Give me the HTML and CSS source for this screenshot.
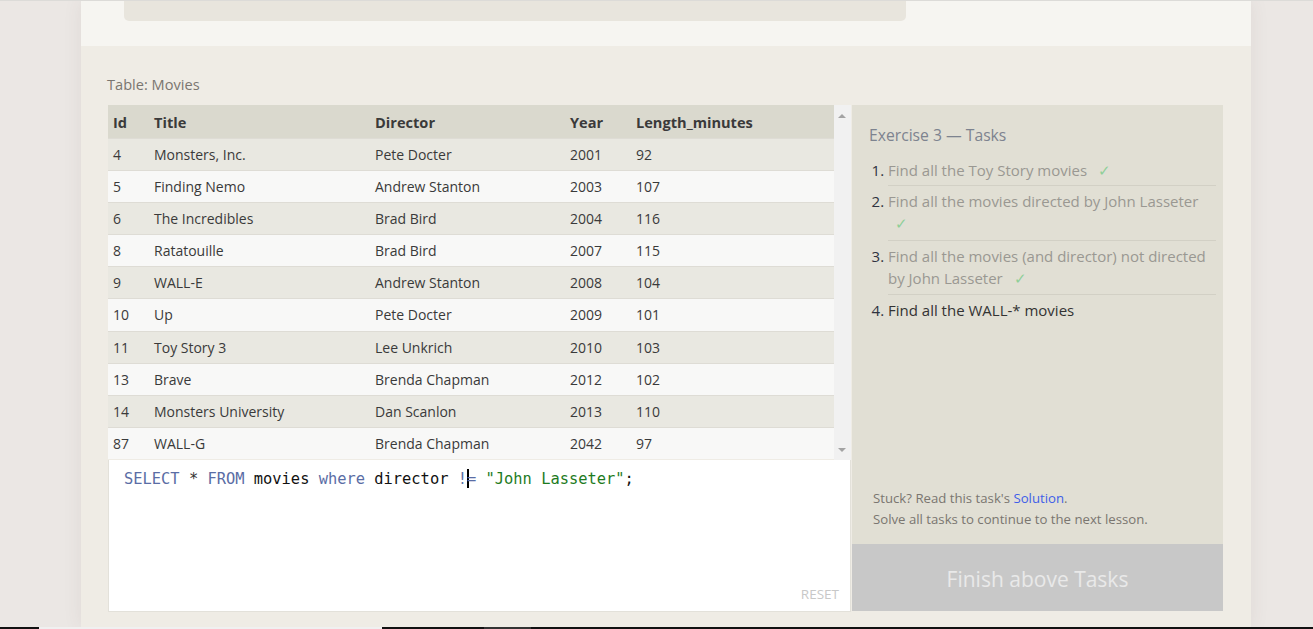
FILE: index.html
```html
<!DOCTYPE html>
<html>
<head>
<meta charset="utf-8">
<link rel="stylesheet" href="styles.css">
</head>
<body>
<div class="page">
  <div class="top-section">
    <div class="prev-box"></div>
  </div>
  <div class="exercise">
    <div class="table-label">Table: Movies</div>
    <div class="workspace">
      <div class="left-col">
        <div class="table-wrap">
          <div class="table-area">
            <table class="movies">
              <thead>
                <tr><th class="c-id">Id</th><th class="c-title">Title</th><th class="c-dir">Director</th><th class="c-year">Year</th><th>Length_minutes</th></tr>
              </thead>
              <tbody>
                <tr><td>4</td><td>Monsters, Inc.</td><td>Pete Docter</td><td>2001</td><td>92</td></tr>
                <tr><td>5</td><td>Finding Nemo</td><td>Andrew Stanton</td><td>2003</td><td>107</td></tr>
                <tr><td>6</td><td>The Incredibles</td><td>Brad Bird</td><td>2004</td><td>116</td></tr>
                <tr><td>8</td><td>Ratatouille</td><td>Brad Bird</td><td>2007</td><td>115</td></tr>
                <tr><td>9</td><td>WALL-E</td><td>Andrew Stanton</td><td>2008</td><td>104</td></tr>
                <tr class="tall"><td>10</td><td>Up</td><td>Pete Docter</td><td>2009</td><td>101</td></tr>
                <tr><td>11</td><td>Toy Story 3</td><td>Lee Unkrich</td><td>2010</td><td>103</td></tr>
                <tr><td>13</td><td>Brave</td><td>Brenda Chapman</td><td>2012</td><td>102</td></tr>
                <tr><td>14</td><td>Monsters University</td><td>Dan Scanlon</td><td>2013</td><td>110</td></tr>
                <tr><td>87</td><td>WALL-G</td><td>Brenda Chapman</td><td>2042</td><td>97</td></tr>
              </tbody>
            </table>
          </div>
          <div class="scrollbar">
            <span class="arrow up"></span>
            <span class="arrow down"></span>
          </div>
        </div>
        <div class="editor">
          <div class="code"><span class="kw">SELECT</span> <span class="op">*</span> <span class="kw">FROM</span> movies <span class="kw">where</span> director <span class="kw">!</span><span class="cursor"></span><span class="kw">=</span> <span class="str">"John Lasseter"</span>;</div>
          <div class="reset">RESET</div>
        </div>
      </div>
      <div class="right-col">
        <div class="tasks">
          <div class="tasks-title">Exercise 3 — Tasks</div>
          <ol class="task-list">
            <li class="done"><span class="t">Find all the Toy Story movies <span class="check">✓</span></span></li>
            <li class="done"><span class="t">Find all the movies directed by John Lasseter <span class="check">✓</span></span></li>
            <li class="done"><span class="t">Find all the movies (and director) not directed by John Lasseter <span class="check">✓</span></span></li>
            <li class="current"><span class="t">Find all the WALL-* movies</span></li>
          </ol>
          <div class="help">
            <div>Stuck? Read this task's <a class="link">Solution</a>.</div>
            <div>Solve all tasks to continue to the next lesson.</div>
          </div>
        </div>
        <div class="finish">Finish above Tasks</div>
      </div>
    </div>
  </div>
</div>
<div class="taskbar">
  <span class="tb-black tb-a"></span><span class="tb-light"></span><span class="tb-black tb-b"></span><span class="tb-grey"></span><span class="tb-black tb-c"></span>
</div>
</body>
</html>
```
FILE: styles.css
```css
html, body {
  margin: 0;
  padding: 0;
}
body {
  width: 1313px;
  height: 629px;
  overflow: hidden;
  background: #ebe7e4;
  border-top: 1px solid #dcdbd8;
  box-sizing: border-box;
  font-family: "Open Sans", "Noto Sans", sans-serif;
  color: #333;
  display: flex;
  flex-direction: column;
}
.page {
  width: 1170px;
  margin-left: 81px;
  height: 626px;
  box-shadow: 0 0 18px rgba(90, 70, 60, 0.08);
  display: flex;
  flex-direction: column;
}
.top-section {
  height: 45px;
  background: #f6f5f1;
  padding-left: 43px;
}
.prev-box {
  width: 782px;
  height: 20px;
  background: #e8e5dd;
  border-radius: 0 0 5px 5px;
}
.exercise {
  flex: 1;
  background: #efece5;
  padding: 28px 28px 0 26px;
}
.table-label {
  font-size: 14.6px;
  color: #7a7670;
  line-height: 20px;
  height: 20px;
}
.workspace {
  margin-top: 11px;
  display: flex;
  margin-left: 1px;
}
.left-col {
  width: 743px;
  display: flex;
  flex-direction: column;
}
.table-wrap {
  height: 355px;
  display: flex;
  overflow: hidden;
}
.table-area {
  width: 726px;
  overflow: hidden;
}
.movies {
  width: 100%;
  border-collapse: collapse;
  font-size: 14px;
  color: #333;
}
.movies th {
  background: #dad9ce;
  text-align: left;
  font-weight: 700;
  height: 32px;
  padding: 1px 0 0 5px;
  font-size: 14.6px;
  color: #3a3a3a;
}
.movies td {
  height: 31px;
  padding: 0 0 0 5px;
  border-top: 1px solid #dedcd5;
  color: #3a3a3a;
}
.movies tr.tall td { padding-bottom: 1px; }
.movies tbody tr:nth-child(odd) td { background: #e9e8e1; }
.movies tbody tr:nth-child(even) td { background: #f8f8f7; }
.c-id { width: 36px; }
.c-title { width: 216px; }
.c-dir { width: 190px; }
.c-year { width: 61px; }
.scrollbar {
  width: 17px;
  background: #f1f1f1;
  position: relative;
}
.arrow {
  position: absolute;
  left: 4px;
  width: 0;
  height: 0;
  border-left: 4px solid transparent;
  border-right: 4px solid transparent;
}
.arrow.up { top: 9px; border-bottom: 4px solid #a3a3a3; }
.arrow.down { bottom: 8px; border-top: 4px solid #a3a3a3; }
.editor {
  height: 152px;
  background: #fff;
  border: 1px solid #e3e1da;
  border-top: none;
  box-sizing: border-box;
  position: relative;
  padding: 9px 0 0 15px;
}
.code {
  font-family: "DejaVu Sans Mono", "Liberation Mono", monospace;
  font-size: 15.4px;
  line-height: 20px;
  color: #111;
}
.kw { color: #5a6da5; }
.op { color: #333; }
.str { color: #1e7b1e; }
.cursor {
  display: inline-block;
  width: 2px;
  height: 19px;
  background: #000;
  vertical-align: -4px;
  margin-right: -2px;
}
.reset {
  position: absolute;
  right: 11px;
  bottom: 8px;
  font-size: 13.5px;
  color: #c8c8c8;
}
.right-col {
  width: 371px;
  margin-left: 1px;
  display: flex;
  flex-direction: column;
}
.tasks {
  height: 439px;
  background: #e1dfd4;
  padding: 19px 7px 0 17px;
  box-sizing: border-box;
  display: flex;
  flex-direction: column;
}
.tasks-title {
  font-size: 15.7px;
  color: #7d838f;
  line-height: 22px;
}
.task-list {
  margin: 9px 0 0 0;
  padding: 0 0 0 19px;
  font-size: 15px;
  line-height: 22px;
}
.task-list li {
  border-bottom: 1px solid #d2d0c5;
  padding: 4px 0 5px 0;
  color: #2f3340;
}
.task-list li:nth-child(1) { padding-bottom: 4px; }
.task-list li:nth-child(2) { padding-bottom: 6px; }
.task-list li:last-child { border-bottom: none; }
.task-list li.done .t { color: #9a9892; }
.task-list li.current .t { color: #333; }
.check {
  color: #8fcf99;
  margin-left: 7px;
}
.help {
  margin-top: auto;
  padding: 0 0 14px 4px;
  font-size: 13.2px;
  line-height: 21px;
  color: #7a7670;
}
.link { color: #3e5ee8; }
.finish {
  height: 67px;
  background: #c8c8c8;
  color: #e9e9e9;
  font-size: 21px;
  display: flex;
  align-items: center;
  justify-content: center;
  padding-top: 2px;
  box-sizing: border-box;
}
.taskbar {
  margin-top: auto;
  height: 2px;
  display: flex;
}
.taskbar span { height: 2px; }
.tb-black { background: #111; }
.tb-a { width: 39px; }
.tb-light { width: 343px; background: #f0f0f0; }
.tb-b { width: 102px; }
.tb-grey { width: 47px; background: #333; }
.tb-c { flex: 1; }
```
